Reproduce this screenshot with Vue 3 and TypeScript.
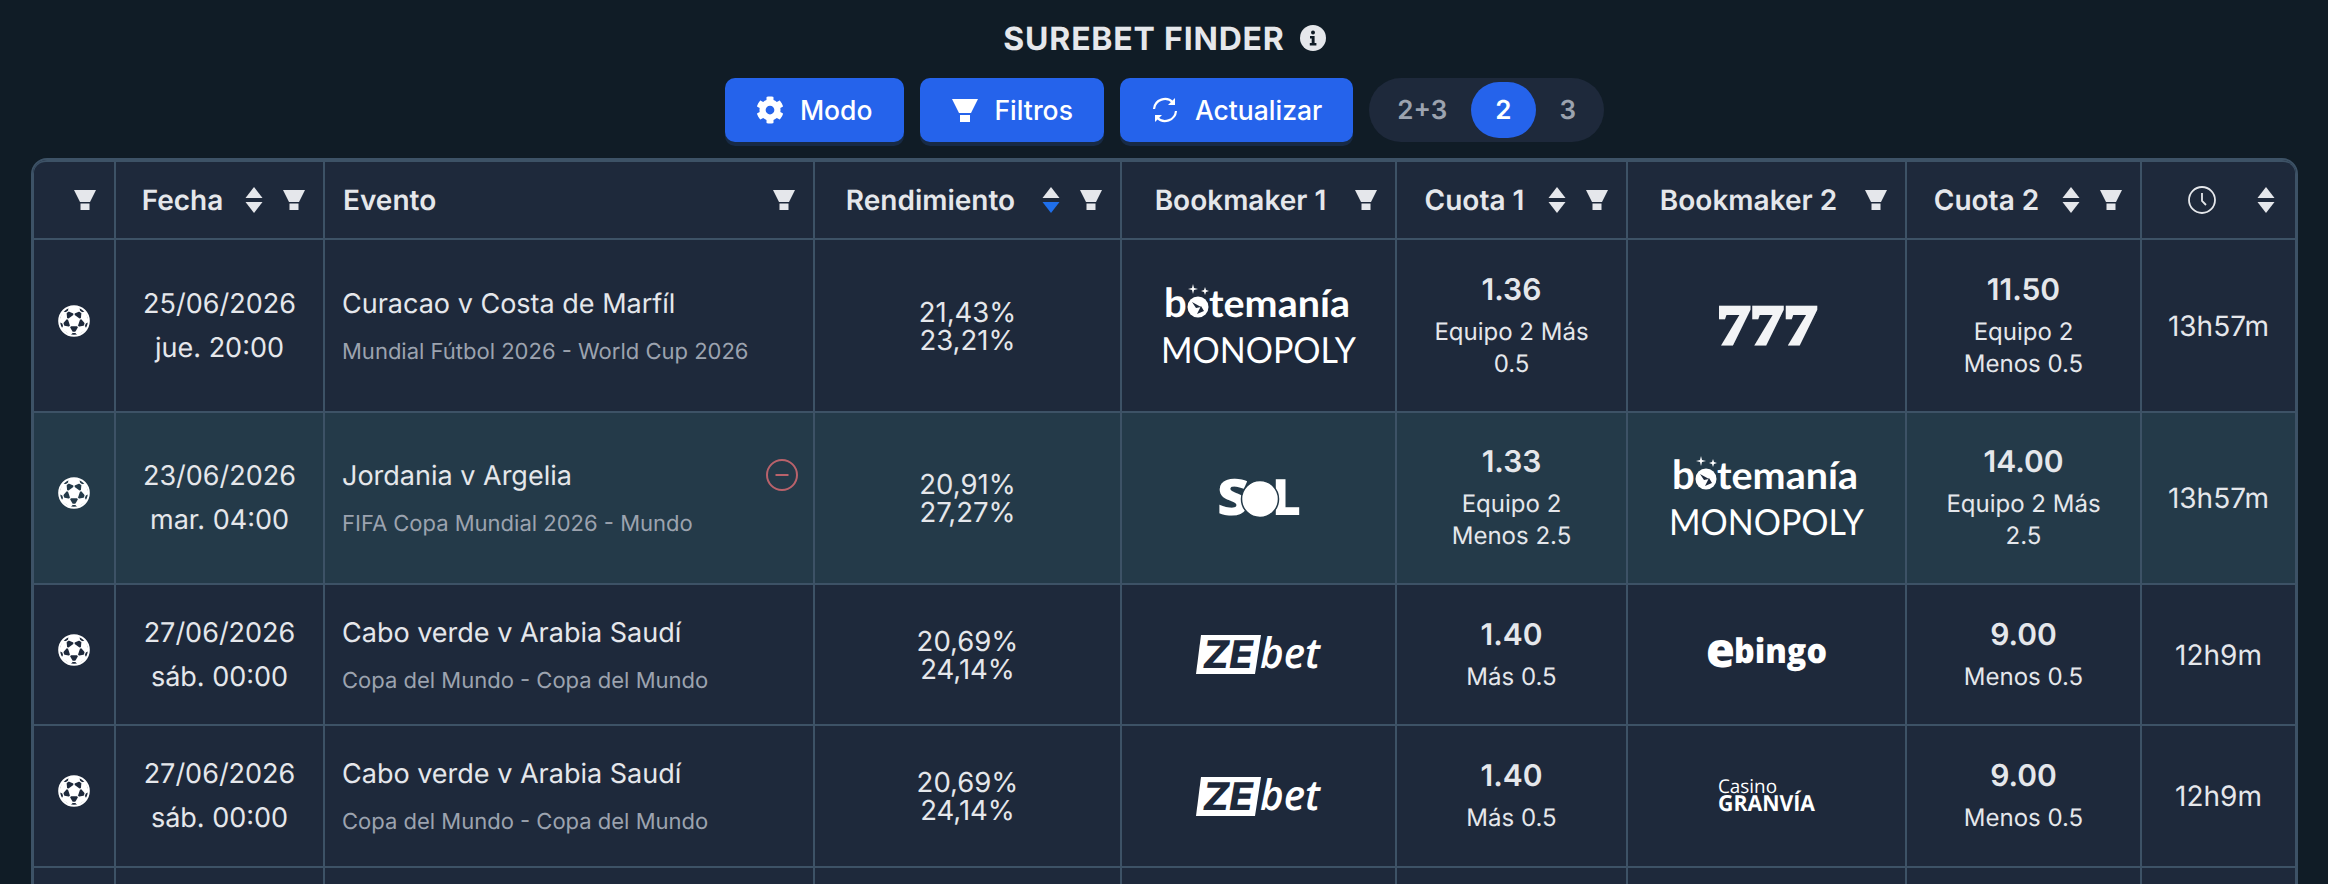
<script setup lang="ts">
interface Side {
  book: string
  odd: string
  line: string
}
interface Row {
  date: string
  day: string
  title: string
  league: string
  yields: string[]
  sides: Side[]
  age: string
  hot?: boolean
  height: number
}

const cols = [82, 209, 490, 307, 275, 231, 279, 235, 153]

const heads = [
  { label: "", sort: false, filter: true },
  { label: "Fecha", sort: true, filter: true },
  { label: "Evento", sort: false, filter: true, left: true },
  { label: "Rendimiento", sort: true, filter: true, active: true },
  { label: "Bookmaker 1", sort: false, filter: true },
  { label: "Cuota 1", sort: true, filter: true },
  { label: "Bookmaker 2", sort: false, filter: true },
  { label: "Cuota 2", sort: true, filter: true },
  { label: "", clock: true, sort: true, filter: false },
]

const rows: Row[] = [
  {
    date: "25/06/2026",
    day: "jue. 20:00",
    title: "Curacao v Costa de Marfíl",
    league: "Mundial Fútbol 2026 - World Cup 2026",
    yields: ["21,43%", "23,21%"],
    sides: [
      { book: "botemania", odd: "1.36", line: "Equipo 2 Más 0.5" },
      { book: "777", odd: "11.50", line: "Equipo 2 Menos 0.5" },
    ],
    age: "13h57m",
    height: 173,
  },
  {
    date: "23/06/2026",
    day: "mar. 04:00",
    title: "Jordania v Argelia",
    league: "FIFA Copa Mundial 2026 - Mundo",
    yields: ["20,91%", "27,27%"],
    sides: [
      { book: "sol", odd: "1.33", line: "Equipo 2 Menos 2.5" },
      { book: "botemania", odd: "14.00", line: "Equipo 2 Más 2.5" },
    ],
    age: "13h57m",
    hot: true,
    height: 172,
  },
  {
    date: "27/06/2026",
    day: "sáb. 00:00",
    title: "Cabo verde v Arabia Saudí",
    league: "Copa del Mundo - Copa del Mundo",
    yields: ["20,69%", "24,14%"],
    sides: [
      { book: "zebet", odd: "1.40", line: "Más 0.5" },
      { book: "ebingo", odd: "9.00", line: "Menos 0.5" },
    ],
    age: "12h9m",
    height: 141,
  },
  {
    date: "27/06/2026",
    day: "sáb. 00:00",
    title: "Cabo verde v Arabia Saudí",
    league: "Copa del Mundo - Copa del Mundo",
    yields: ["20,69%", "24,14%"],
    sides: [
      { book: "zebet", odd: "1.40", line: "Más 0.5" },
      { book: "granvia", odd: "9.00", line: "Menos 0.5" },
    ],
    age: "12h9m",
    height: 142,
  },
]

const patches = [0, 72, 144, 216, 288]
</script>

<template>
  <div class="page">
    <h1 class="title">
      SUREBET FINDER
      <svg class="info" viewBox="0 0 26 26">
        <circle cx="13" cy="13" r="13" fill="#e5e7eb" />
        <circle cx="13" cy="7.6" r="2" fill="#101c26" />
        <path d="M10 11h4.6v7H16.4v2.4H9.8V18h1.9v-4.6H10z" fill="#101c26" />
      </svg>
    </h1>

    <div class="toolbar">
      <button class="btn">
        <svg class="btn-icon" viewBox="0 0 512 512">
          <path
            fill="#fff"
            d="M487.4 315.7l-42.6-24.6c4.3-23.2 4.3-47 0-70.2l42.6-24.6c4.9-2.8 7.1-8.6 5.5-14-11.1-35.6-30-67.8-54.7-94.6-3.8-4.1-10-5.1-14.8-2.3L380.8 110c-17.9-15.4-38.5-27.3-60.8-35.1V25.8c0-5.6-3.9-10.5-9.4-11.7-36.7-8.2-74.3-7.8-109.2 0-5.5 1.2-9.4 6.1-9.4 11.7V75c-22.2 7.9-42.8 19.8-60.8 35.1L88.7 85.5c-4.9-2.8-11-1.9-14.8 2.3-24.7 26.7-43.6 58.9-54.7 94.6-1.7 5.4.6 11.2 5.5 14L67.3 221c-4.3 23.2-4.3 47 0 70.2l-42.6 24.6c-4.9 2.8-7.1 8.6-5.5 14 11.1 35.6 30 67.8 54.7 94.6 3.8 4.1 10 5.1 14.8 2.3l42.6-24.6c17.9 15.4 38.5 27.3 60.8 35.1v49.2c0 5.6 3.9 10.5 9.4 11.7 36.7 8.2 74.3 7.8 109.2 0 5.5-1.2 9.4-6.1 9.4-11.7v-49.2c22.2-7.9 42.8-19.8 60.8-35.1l42.6 24.6c4.9 2.8 11 1.9 14.8-2.3 24.7-26.7 43.6-58.9 54.7-94.6 1.5-5.5-.7-11.3-5.6-14.1zM256 336c-44.1 0-80-35.9-80-80s35.9-80 80-80 80 35.9 80 80-35.9 80-80 80z"
          />
        </svg>
        Modo
      </button>
      <button class="btn">
        <svg class="btn-icon" viewBox="0 0 28 28">
          <path fill="#fff" d="M1 3h26l-7 14H8z" />
          <rect fill="#fff" x="9" y="19" width="10" height="7" />
        </svg>
        Filtros
      </button>
      <button class="btn">
        <svg class="btn-icon" viewBox="0 0 28 28" fill="none" stroke="#fff" stroke-width="2.2">
          <path d="M3 13A11 11 0 0 1 22 6.5" />
          <path d="M25 15A11 11 0 0 1 6 21.5" />
          <path d="M24 2v7h-7z" fill="#fff" stroke="none" />
          <path d="M4 26v-7h7z" fill="#fff" stroke="none" />
        </svg>
        Actualizar
      </button>
      <div class="pill">
        <span class="pill-item">2+3</span>
        <span class="pill-item on">2</span>
        <span class="pill-item">3</span>
      </div>
    </div>

    <div class="wrap">
      <table class="grid">
        <colgroup>
          <col v-for="(w, i) in cols" :key="i" :style="{ width: w + 'px' }" />
        </colgroup>
        <thead>
          <tr>
            <th v-for="(h, i) in heads" :key="i">
              <div class="head">
                <span class="label" :class="{ left: h.left }">
                  {{ h.label }}
                  <svg v-if="h.clock" class="clock" viewBox="0 0 28 28" fill="none" stroke="#e5e7eb" stroke-width="1.8">
                    <circle cx="14" cy="14" r="13" />
                    <path d="M14 7v8l4 4" />
                  </svg>
                </span>
                <svg v-if="h.sort" class="sort" :class="{ nogap: !h.filter }" viewBox="0 0 18 26">
                  <path d="M9 0l8.500 11H.5z" fill="#e5e7eb" />
                  <path d="M9 26L.5 15h17z" :fill="h.active ? '#1f6feb' : '#e5e7eb'" />
                </svg>
                <svg v-if="h.filter" class="funnel" viewBox="0 0 22 20">
                  <path d="M0 0h22l-6 12H6z" fill="#e5e7eb" />
                  <rect x="6.500" y="13.500" width="9" height="6.500" fill="#e5e7eb" />
                </svg>
              </div>
            </th>
          </tr>
        </thead>
        <tbody>
          <tr v-for="(r, i) in rows" :key="i" :class="{ hot: r.hot }">
            <td :style="{ height: r.height + 'px' }" class="center">
              <svg class="ball" viewBox="0 0 32 32">
                <circle cx="16" cy="16" r="14.800" fill="none" stroke="#fff" stroke-width="2" />
                <path d="M16 9.500l6.200 4.500-2.400 7.300h-7.600L9.800 14z" fill="#fff" />
                <g v-for="a in patches" :key="a" :transform="`rotate(${a} 16 16)`">
                  <path d="M10.500 2h11l.5 4.200-6 2.600-6-2.600z" fill="#fff" />
                  <path d="M16 8v2" stroke="#fff" stroke-width="1.200" />
                  <path d="M10.500 6L5.500 9.500" stroke="#fff" stroke-width="1.200" fill="none" />
                </g>
              </svg>
            </td>
            <td class="center">
              <div class="date">{{ r.date }}</div>
              <div class="date">{{ r.day }}</div>
            </td>
            <td class="event">
              <div class="event-title">{{ r.title }}</div>
              <div class="event-league">{{ r.league }}</div>
              <svg v-if="r.hot" class="minus" viewBox="0 0 32 32" fill="none" stroke="#b9626b" stroke-width="2">
                <circle cx="16" cy="16" r="15" />
                <path d="M9.500 16h13" />
              </svg>
            </td>
            <td class="center">
              <div v-for="y in r.yields" :key="y" class="yield">{{ y }}</div>
            </td>
            <template v-for="(s, j) in r.sides" :key="j">
              <td class="center">
                <svg v-if="s.book === 'botemania'" class="logo" width="196" height="84" viewBox="0 0 196 84" fill="#fff">
                  <g transform="translate(0 -3)">
                    <text x="3" y="36" class="lato-b" font-size="40">b</text>
                    <circle cx="37" cy="26" r="10.500" />
                    <path d="M31 21l9 5-5 1zM36 33l4-8 3 5z" fill="#1e293b" />
                    <path d="M32 3l1 4 4 1-4 1-1 4-1-4-4-1 4-1zM44 6l1 3 3 1-3 1-1 3-1-3-3-1 3-1z" />
                    <text x="48" y="36" class="lato-b" font-size="38" textLength="141" lengthAdjust="spacingAndGlyphs">temanía</text>
                    <text x="0" y="82" class="lato-r" font-size="36" textLength="195" lengthAdjust="spacingAndGlyphs">MONOPOLY</text>
                  </g>
                </svg>
                <svg v-else-if="s.book === '777'" class="logo" width="102" height="40" viewBox="0 0 102 40">
                  <text x="1" y="38" class="serif" font-size="56" textLength="100" lengthAdjust="spacingAndGlyphs" fill="#f3f4f6" stroke="#f3f4f6" stroke-width="3">777</text>
                </svg>
                <svg v-else-if="s.book === 'sol'" class="logo" width="84" height="40" viewBox="0 0 84 40" fill="#fff">
                  <text x="0" y="37" class="open-x" font-size="50" textLength="32" lengthAdjust="spacingAndGlyphs">S</text>
                  <text x="55" y="37" class="open-x" font-size="50" textLength="29" lengthAdjust="spacingAndGlyphs">L</text>
                  <circle cx="43" cy="21" r="18.500" stroke="#243a49" stroke-width="1.500" />
                </svg>
                <svg v-else-if="s.book === 'zebet'" class="logo" width="125" height="39" viewBox="0 0 125 39" fill="#fff">
                  <path d="M5 0h60l-6 39H0z" />
                  <text x="7" y="33" class="inter-x" font-size="38" textLength="50" lengthAdjust="spacingAndGlyphs" fill="#1e293b">ZE</text>
                  <text x="64" y="33" class="open-i" font-size="42" textLength="60" lengthAdjust="spacingAndGlyphs">bet</text>
                </svg>
                <svg v-else-if="s.book === 'ebingo'" class="logo logo-low" width="122" height="36" viewBox="0 0 122 36" fill="#fff">
                  <text x="0" y="29" class="open-x" font-size="48" textLength="29" lengthAdjust="spacingAndGlyphs">e</text>
                  <text x="28" y="25" class="open-x" font-size="34" textLength="93" lengthAdjust="spacingAndGlyphs">bingo</text>
                </svg>
                <svg v-else class="logo" width="98" height="34" viewBox="0 0 98 34" fill="#fff">
                  <text x="0" y="14" class="open-r" font-size="19" textLength="59" lengthAdjust="spacingAndGlyphs">Casino</text>
                  <text x="0" y="32" class="open-b" font-size="22" textLength="97" lengthAdjust="spacingAndGlyphs">GRANVÍA</text>
                </svg>
              </td>
              <td class="center odds">
                <div class="odd">{{ s.odd }}</div>
                <div class="line">{{ s.line }}</div>
              </td>
            </template>
            <td class="center age">{{ r.age }}</td>
          </tr>
          <tr>
            <td v-for="(w, i) in cols" :key="i" class="empty"></td>
          </tr>
        </tbody>
      </table>
    </div>
  </div>
</template>

<style>
html,
body {
  height: 100%;
  overflow: hidden;
  background: #101c26;
}
</style>

<style scoped>
* {
  box-sizing: border-box;
}
.page {
  height: 884px;
  overflow: hidden;
  padding: 18px 30px 0 31px;
  font-family: Inter, "Liberation Sans", sans-serif;
  color: #e5e7eb;
  background: #101c26;
  text-rendering: geometricPrecision;
}
.title {
  margin: 0 0 20px;
  height: 40px;
  display: flex;
  align-items: center;
  justify-content: center;
  gap: 15px;
  font-size: 32px;
  letter-spacing: 0.8px;
  font-weight: 700;
  color: #e5e7eb;
}
.info {
  width: 26px;
  height: 26px;
}
.toolbar {
  display: flex;
  justify-content: center;
  gap: 16px;
  height: 64px;
  margin-bottom: 16px;
}
.btn {
  display: flex;
  align-items: center;
  gap: 16px;
  height: 64px;
  padding: 0 31px;
  border: 0;
  border-radius: 10px;
  background: #2563eb;
  box-shadow: 0 4px 0 #172a45;
  color: #fff;
  font: 500 26.5px Inter, "Liberation Sans", sans-serif;
}
.btn-icon {
  width: 28px;
  height: 28px;
}
.pill {
  display: flex;
  align-items: center;
  height: 64px;
  padding: 4px;
  border-radius: 32px;
  background: #1e293b;
  font-size: 26px;
  font-weight: 600;
  color: #9ca3af;
}
.pill-item {
  height: 56px;
  padding: 0 24px;
  display: flex;
  align-items: center;
  border-radius: 28px;
}
.pill-item.on {
  background: #2563eb;
  color: #fff;
}
.wrap {
  border: 2px solid #3d5266;
  border-radius: 16px;
  overflow: hidden;
  background: #1e293b;
}
.grid {
  width: 100%;
  table-layout: fixed;
  border-collapse: separate;
  border-spacing: 0;
  border: solid #3d5266;
  border-width: 2px 1px 0;
  border-radius: 13px 13px 0 0;
}
th,
td {
  padding: 0 18px;
  border-right: 2px solid #3d5266;
  border-bottom: 2px solid #3d5266;
  font-weight: 400;
}
th:last-child,
td:last-child {
  border-right: 0;
}
th:last-child {
  padding-right: 20px;
}
th {
  height: 78px;
}
.head {
  display: flex;
  align-items: center;
  justify-content: flex-end;
}
.label {
  flex: 1;
  display: flex;
  justify-content: center;
  align-items: center;
  margin-right: 14px;
  font-size: 28px;
  font-weight: 600;
  color: #e5e7eb;
  white-space: nowrap;
}
.label.left {
  justify-content: flex-start;
}
.clock {
  width: 28px;
  height: 28px;
}
.sort {
  width: 18px;
  height: 26px;
  margin-right: 20px;
  flex-shrink: 0;
}
.sort.nogap {
  margin-right: 0;
}
.funnel {
  width: 22px;
  height: 20px;
  flex-shrink: 0;
}
.hot td {
  background: #243a49;
}
.center {
  text-align: center;
  padding-left: 6px;
  padding-right: 6px;
}
.ball {
  display: block;
  width: 32px;
  height: 32px;
  margin: 0 auto 10px;
}
.date {
  font-size: 27px;
  line-height: 44px;
}
.event {
  position: relative;
  padding-left: 17px;
  padding-bottom: 1px;
}
.event-title {
  font-size: 27px;
  line-height: 36px;
}
.event-league {
  margin-top: 17px;
  font-size: 22px;
  line-height: 26px;
  color: #9ca3af;
}
.minus {
  position: absolute;
  top: 46px;
  right: 15px;
  width: 32px;
  height: 32px;
}
.yield {
  font-size: 27.500px;
  line-height: 28px;
}
.logo {
  display: block;
  margin: 0 auto;
  overflow: visible;
}
.logo-low {
  margin-top: 3px;
}
.lato-b {
  font-family: Lato, sans-serif;
  font-weight: 700;
}
.lato-r {
  font-family: Lato, sans-serif;
  font-weight: 400;
}
.serif {
  font-family: "Liberation Serif", serif;
  font-weight: 700;
}
.open-x {
  font-family: "Open Sans", sans-serif;
  font-weight: 800;
}
.open-i {
  font-family: "Open Sans", sans-serif;
  font-weight: 600;
  font-style: italic;
}
.open-r {
  font-family: "Open Sans", sans-serif;
  font-weight: 400;
}
.open-b {
  font-family: "Open Sans", sans-serif;
  font-weight: 700;
}
.inter-x {
  font-family: Inter, sans-serif;
  font-weight: 800;
  font-style: italic;
}
.odds {
  padding-left: 28px;
  padding-right: 28px;
}
.odd {
  font-size: 30px;
  font-weight: 600;
  line-height: 36px;
  margin-bottom: 8px;
}
.line {
  font-size: 24px;
  line-height: 32px;
}
.age {
  font-size: 28px;
}
.empty {
  height: 142px;
}
</style>
